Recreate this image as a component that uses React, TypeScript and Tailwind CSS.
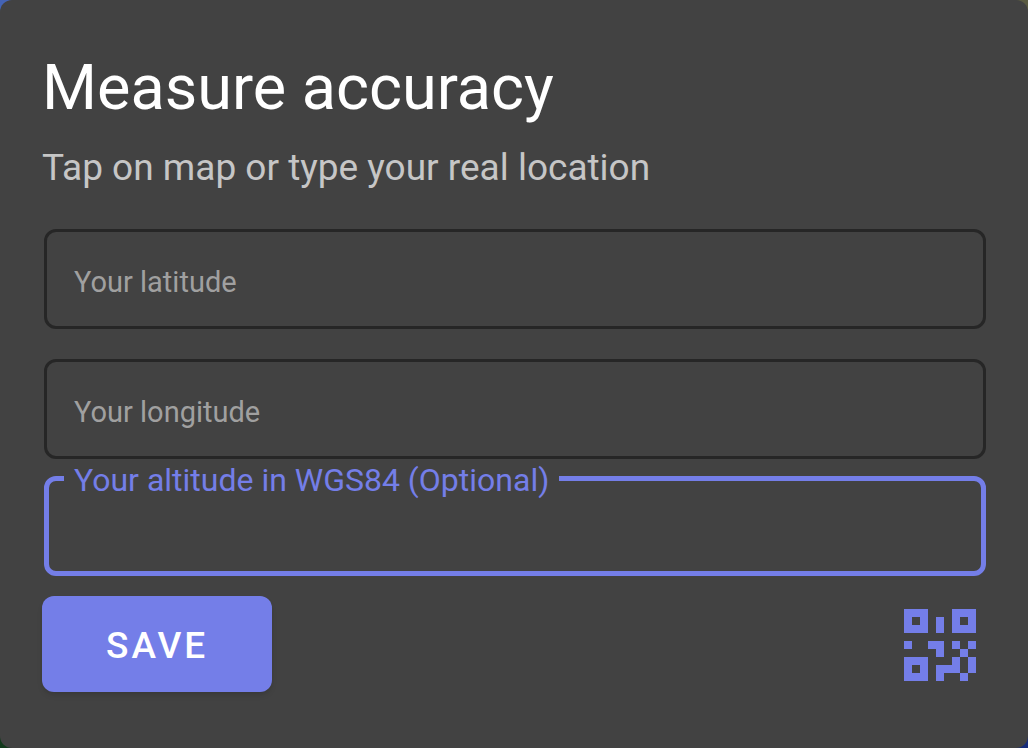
import { useState } from "react";

function QrIcon() {
  return (
    <svg viewBox="0 0 9 9" className="block size-[72px]" fill="currentColor" fillRule="evenodd" aria-hidden="true">
      <path d="M0 0h3v3H0zM1 1v1h1V1zM6 0h3v3H6zM7 1v1h1V1zM0 6h3v3H0zM1 7v1h1V7z" />
      <path d="M4 1h1v2H4zM0 4h1v1H0zM3 4h2v2H4V5H3zM6 4h1v1H6zM8 4h1v1H8zM7 5h1v1H7zM8 6h1v2H8zM6 6h1v2H5v1H4V7h2zM7 8h1v1H7z" />
    </svg>
  );
}

function OutlinedField({ id, label }: { id: string; label: string }) {
  const [value, setValue] = useState("");
  return (
    <div className="flex h-[100px] items-center gap-3 rounded-xl border-3 border-[#262626] px-[27px] pt-1.5 text-[29px] leading-9">
      <label htmlFor={id} className="text-[#a0a0a0]">
        {label}
      </label>
      <input
        id={id}
        inputMode="decimal"
        value={value}
        onChange={(e) => setValue(e.target.value)}
        className="min-w-0 flex-1 bg-transparent text-white outline-none"
      />
    </div>
  );
}

export default function App() {
  const [altitude, setAltitude] = useState("");
  return (
    <div className="grid min-h-screen bg-[conic-gradient(#5a5b42_0_25%,#172c7a_25%_50%,#123a1c_50%_75%,#4463b5_75%)] font-['Roboto',sans-serif]">
      <main className="rounded-xl bg-[#424242] px-[42px] pt-[50px] pb-14">
        <h1 className="text-[63px] leading-[76px] text-white">Measure accuracy</h1>
        <p className="mt-5 text-[37px] leading-[44px] text-[#c6c6c6]">Tap on map or type your real location</p>

        <form onSubmit={(e) => e.preventDefault()} className="mt-[39px]">
          <div className="ml-0.5 flex flex-col">
            <div className="flex flex-col gap-[30px]">
              <OutlinedField id="latitude" label="Your latitude" />
              <OutlinedField id="longitude" label="Your longitude" />
            </div>
            <fieldset className="rounded-xl border-5 border-[#747ee8] px-[15px]">
              <legend className="px-[10px] pt-1 text-[32px] leading-[35px] text-[#747ee8]">
                <label htmlFor="altitude">Your altitude in WGS84 (Optional)</label>
              </legend>
              <input
                id="altitude"
                inputMode="decimal"
                value={altitude}
                onChange={(e) => setAltitude(e.target.value)}
                className="mb-2 block h-[65px] w-full bg-transparent px-[10px] text-[32px] text-white outline-none"
              />
            </fieldset>
          </div>

          <div className="mt-5 flex items-center justify-between pr-[10px]">
            <button
              type="submit"
              className="h-24 rounded-xl bg-[#747ee8] px-16 pt-[3px] text-[37px] leading-[44px] font-medium tracking-[3px] text-white shadow-md"
            >
              SAVE
            </button>
            <button type="button" aria-label="QR code" className="pt-0.5 text-[#747ee8]">
              <QrIcon />
            </button>
          </div>
        </form>
      </main>
    </div>
  );
}
